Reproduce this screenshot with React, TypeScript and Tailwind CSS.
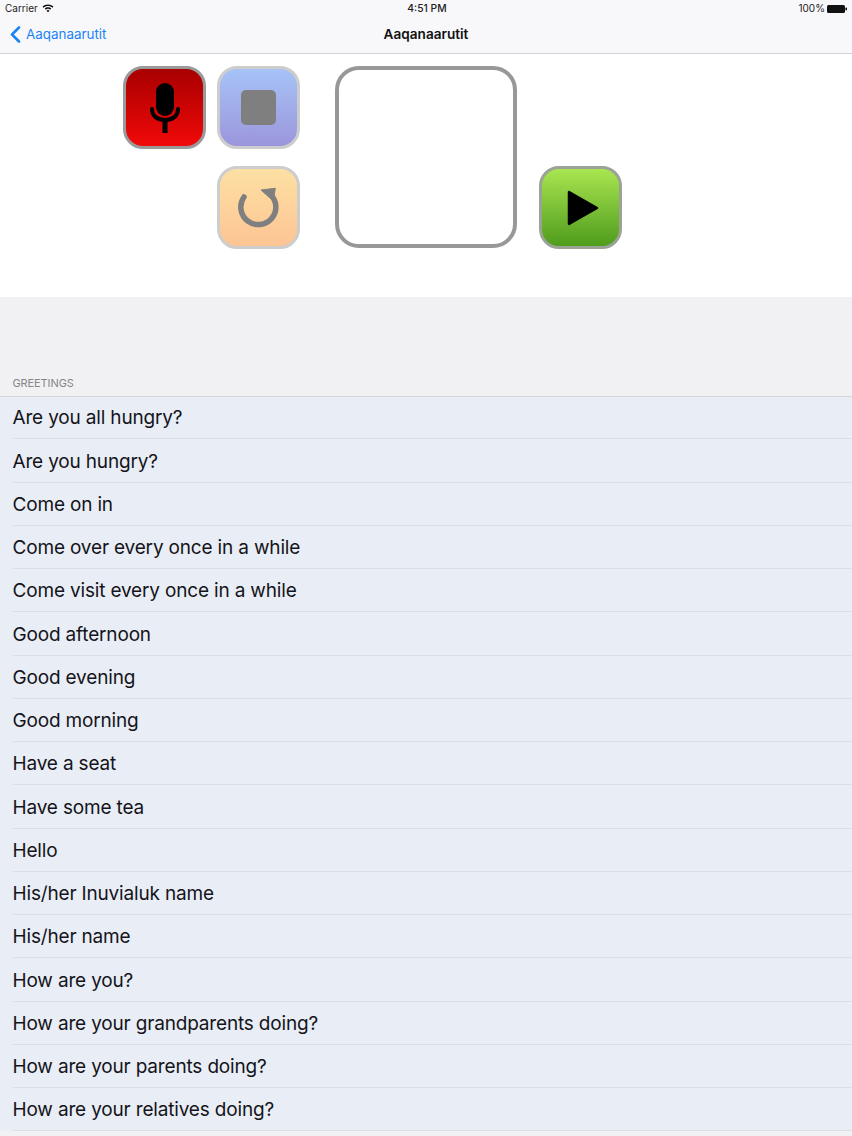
const rows = [
  "Are you all hungry?",
  "Are you hungry?",
  "Come on in",
  "Come over every once in a while",
  "Come visit every once in a while",
  "Good afternoon",
  "Good evening",
  "Good morning",
  "Have a seat",
  "Have some tea",
  "Hello",
  "His/her Inuvialuk name",
  "His/her name",
  "How are you?",
  "How are your grandparents doing?",
  "How are your parents doing?",
  "How are your relatives doing?",
];

const btn = "w-[83px] h-[83px] rounded-[20px] border-[3px] flex items-center justify-center";

export default function App() {
  return (
    <div className="w-[852px] h-[1136px] overflow-hidden bg-[#f1f1f3] font-['Inter','Liberation_Sans',sans-serif]">
      <header className="h-[54px] bg-[#f8f8fa] border-b border-[#d2d2d6] flex flex-col">
        <div className="h-[17px] flex items-center justify-between px-[5px] text-[10px] text-[#222]">
          <div className="flex items-center gap-[4px] w-[200px]">
            <span>Carrier</span>
            <svg width="12" height="9" viewBox="0 0 13 10" fill="#111">
              <path d="M6.5 0.5C4.1 0.5 2 1.4 0.4 3l1.2 1.3C2.9 3 4.6 2.3 6.5 2.3s3.6.7 4.9 2L12.6 3C11 1.4 8.900.5 6.500.5z" />
              <path d="M6.500 3.600c-1.400 0-2.700.6-3.600 1.500l1.200 1.300c.6-.6 1.500-1 2.400-1s1.800.4 2.400 1l1.200-1.300c-.9-.9-2.200-1.500-3.600-1.500z" />
              <path d="M6.500 6.700c-.7 0-1.300.3-1.700.7l1.700 1.900 1.700-1.900c-.4-.4-1-.7-1.700-.7z" />
            </svg>
          </div>
          <span className="font-medium text-[10.300px] ml-[2px]">4:51 PM</span>
          <div className="flex items-center justify-end gap-[2px] w-[200px]">
            <span>100%</span>
            <svg width="20" height="8" viewBox="0 0 20 8" fill="#111">
              <rect x="0" y="0" width="18" height="8" rx="1.500" />
              <rect x="18.500" y="2.500" width="1.500" height="3" rx="0.700" />
            </svg>
          </div>
        </div>
        <div className="flex-1 relative flex items-center justify-center">
          <div className="absolute left-[10px] top-[9px] flex items-center gap-[5px] text-[#1a84f5] text-[13.400px] leading-[17px]">
            <svg width="11" height="17" viewBox="0 0 11 17" fill="none" stroke="#1a84f5" strokeWidth="2.600" strokeLinecap="round" strokeLinejoin="round">
              <path d="M9 1.500 2 8.500l7 7" />
            </svg>
            <span>Aaqanaarutit</span>
          </div>
          <span className="text-[13.600px] font-semibold text-[#111] -mt-[1px]">Aaqanaarutit</span>
        </div>
      </header>

      <section className="h-[243px] bg-white pt-[12px] pl-[123px] flex items-start">
        <div className={`${btn} border-[#9a9a9a] bg-gradient-to-b from-[#a80000] to-[#f20a0a]`}>
          <svg width="30" height="50" viewBox="0 0 30 50">
            <rect x="6" y="0" width="18" height="33" rx="9" fill="#000" />
            <path d="M2 26c0 7 5.500 11 13 11s13-4 13-11" fill="none" stroke="#000" strokeWidth="4" strokeLinecap="round" />
            <rect x="12.500" y="37" width="5" height="13" fill="#000" />
          </svg>
        </div>
        <div className="ml-[11px] flex flex-col gap-[17px]">
          <div className={`${btn} border-[#cdcdcd] bg-gradient-to-b from-[#a6c3f7] to-[#9b96dc]`}>
            <div className="w-[35px] h-[35px] rounded-[5px] bg-[#7f7f7f]" />
          </div>
          <div className={`${btn} border-[#cdcdcd] bg-gradient-to-b from-[#fde0a3] to-[#fdc494]`}>
            <svg width="42" height="42" viewBox="0 0 42 42" fill="none">
              <path d="M6 10A17.500 17.500 0 1 0 32 7" stroke="#7f7f7f" strokeWidth="5.500" strokeLinecap="round" />
              <path d="M23 3 37.300 1.300 35.300 14z" fill="#7f7f7f" stroke="#7f7f7f" strokeWidth="1" strokeLinejoin="round" />
            </svg>
          </div>
        </div>
        <div className="ml-[35px] w-[182px] h-[182px] rounded-[24px] border-[4px] border-[#98989b] bg-white" />
        <div className={`${btn} mt-[100px] ml-[22px] border-[#9aa396] bg-gradient-to-b from-[#a9e650] to-[#4f9c1c]`}>
          <svg className="ml-[5px]" width="32" height="36" viewBox="0 0 32 36">
            <path d="M2 2 30 18 2 34z" fill="#000" stroke="#000" strokeWidth="2.500" strokeLinejoin="round" />
          </svg>
        </div>
      </section>

      <div className="h-[99px] flex items-end pl-[12.500px] pb-[5px] text-[11px] text-[#85858a] tracking-[-0.1px]">
        GREETINGS
      </div>

      <ul className="bg-[#e9edf5] shadow-[inset_0_1px_0_#d2d5da]">
        {rows.map((r) => (
          <li key={r} className="h-[43.250px] pl-[12.500px]">
            <div className="h-full flex items-center border-b border-[#dadee5] text-[19px] tracking-[-0.17px] text-[#14141a] pt-[3px]">
              {r}
            </div>
          </li>
        ))}
      </ul>
    </div>
  );
}
